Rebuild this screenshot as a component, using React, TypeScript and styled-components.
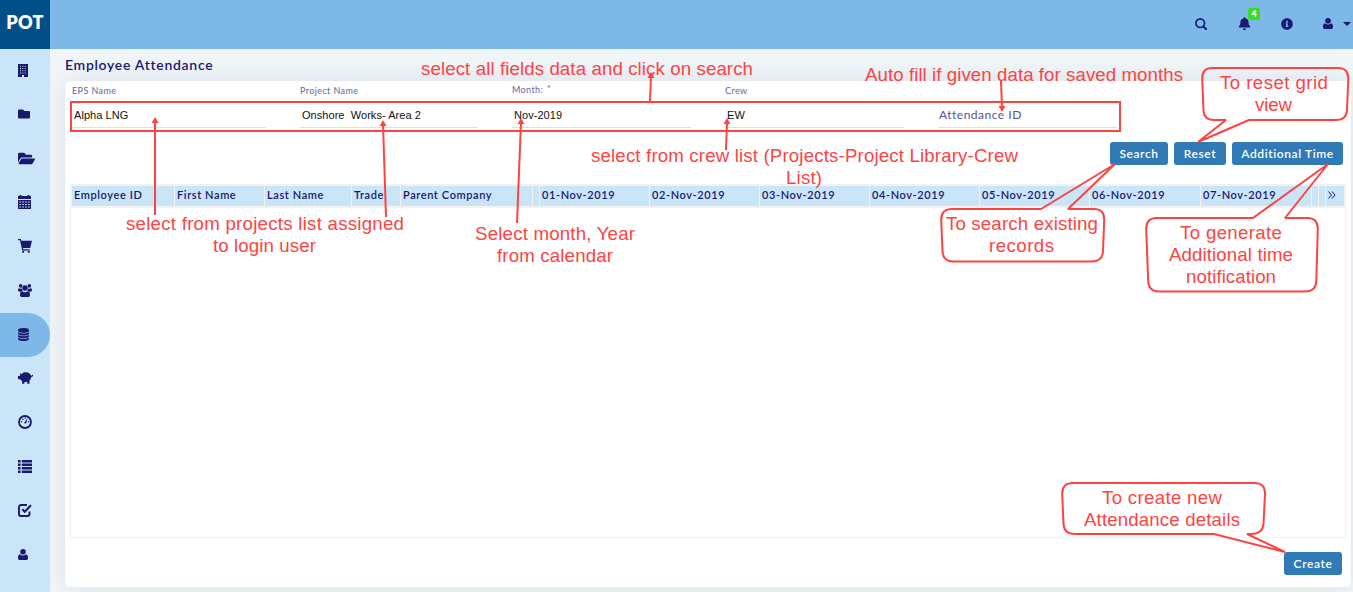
import React from 'react';
import styled, { createGlobalStyle } from 'styled-components';
import { FaFolder, FaFolderOpen, FaBell, FaInfoCircle } from 'react-icons/fa';

const navy = '#191970';
const red = '#fe4343';

const GlobalStyle = createGlobalStyle`
  * { box-sizing: border-box; }
  html, body { margin: 0; height: 592px; overflow: hidden; }
  body { background: #f1f6fa; font-family: Lato, "Liberation Sans", sans-serif; color: ${navy}; }
`;

const Page = styled.div`
  position: relative;
  display: flex;
  flex-direction: column;
  width: 1353px;
  height: 592px;
  overflow: hidden;
`;

const TopBar = styled.header`
  display: flex;
  height: 49px;
  background: #7db8e8;
`;

const Brand = styled.div`
  width: 50px;
  height: 49px;
  padding-top: 11px;
  background: #024f88;
  color: #fff;
  text-align: center;
  font-size: 18px;
  line-height: 23px;
  font-weight: 800;
  letter-spacing: 0.3px;
`;

const Tools = styled.div`
  display: flex;
  align-items: center;
  margin-left: auto;
  padding: 0 2px 2px 0;
`;

const Tool = styled.span<{ $gap: number }>`
  position: relative;
  display: flex;
  align-items: center;
  margin-right: ${(p) => p.$gap}px;
  svg { display: block; }
`;

const Badge = styled.span`
  position: absolute;
  left: 10px;
  top: -9px;
  width: 12px;
  height: 12px;
  border-radius: 2px;
  background: #37dd20;
  color: #fff;
  font-size: 9px;
  line-height: 11px;
  font-weight: 900;
  text-align: center;
`;

const Body = styled.div`
  display: flex;
  flex: 1;
  min-height: 0;
`;

const Sidebar = styled.nav`
  position: relative;
  z-index: 1;
  width: 50px;
  background: #cae5f8;
`;

const NavItem = styled.div<{ $active?: boolean }>`
  display: flex;
  align-items: center;
  height: 44px;
  padding: 0 0 2px 18px;
  border-radius: 0 22px 22px 0;
  background: ${(p) => (p.$active ? '#7db8e8' : 'transparent')};
  svg { display: block; overflow: visible; }
`;

const Main = styled.main`
  display: flex;
  flex-direction: column;
  flex: 1;
  padding: 0 2px 5px 15px;
`;

const Title = styled.h1`
  margin: 0;
  height: 32px;
  font-size: 14px;
  line-height: 32px;
  font-weight: 600;
  letter-spacing: 0.7px;
`;

const Card = styled.section`
  display: flex;
  flex-direction: column;
  flex: 1;
  padding: 0 5px;
  border-radius: 5px;
  background: #fff;
  box-shadow: 0 0 28px rgba(90, 110, 120, 0.16);
`;

const Fields = styled.div`
  display: flex;
  height: 47px;
  padding-left: 2px;
`;

const Field = styled.div<{ $width: number; $gap: number }>`
  display: flex;
  flex-direction: column;
  width: ${(p) => p.$width}px;
  margin-right: ${(p) => p.$gap}px;
  border-bottom: 1px solid #dedede;
`;

const Label = styled.label<{ $raised?: boolean }>`
  height: 24px;
  padding-top: ${(p) => (p.$raised ? 3 : 4)}px;
  color: #6565a0;
  font-size: 9px;
  line-height: 12px;
  letter-spacing: 0.4px;
  sup { font-size: 9px; line-height: 0; margin-left: 1px; vertical-align: 1px; }
`;

const Value = styled.div`
  padding-left: 2px;
  color: #111;
  font-family: "Liberation Sans", Arial, sans-serif;
  font-size: 11px;
  line-height: 20px;
  letter-spacing: 0.05px;
  white-space: pre;
`;

const Placeholder = styled.div`
  padding-left: 1px;
  color: #54549a;
  font-size: 12px;
  line-height: 20px;
  letter-spacing: 0.5px;
`;

const Actions = styled.div`
  display: flex;
  justify-content: flex-end;
  gap: 6px;
  padding: 14px 3px 0 0;
`;

const Button = styled.button<{ $width: number }>`
  width: ${(p) => p.$width}px;
  height: 23px;
  padding: 0;
  border: 0;
  border-radius: 3px;
  background: #2f7ab7;
  color: #fff;
  font: 600 12px/23px Lato, sans-serif;
  letter-spacing: 0.6px;
  white-space: nowrap;
`;

const Grid = styled.div`
  display: flex;
  flex-direction: column;
  height: 354px;
  margin-top: 19px;
  border: 1px solid #f1f1f1;
`;

const HeaderRow = styled.div`
  display: flex;
  height: 23px;
  padding: 1px 1px 2px;
  background: #f3f3f3;
`;

const HeaderCell = styled.div<{ $width: number }>`
  flex: none;
  width: ${(p) => p.$width}px;
  height: 20px;
  padding-left: 2px;
  border-right: 1px solid #f3f3f3;
  background: #cae5f8;
  font-size: 11px;
  line-height: 18px;
  font-weight: 600;
  letter-spacing: 0.6px;
  white-space: nowrap;
  &:last-child { border-right: 0; }
`;

const Footer = styled.div`
  display: flex;
  justify-content: flex-end;
  padding: 14px 4px 0 0;
`;

const Notes = styled.svg`
  position: absolute;
  inset: 0;
  z-index: 2;
  pointer-events: none;
  font-family: "Liberation Sans", Arial, sans-serif;
  font-size: 18.67px;
`;

const Glyph = ({ w, h, children }: { w: number; h: number; children: React.ReactNode }) => (
  <svg width={w} height={h} viewBox={`0 0 ${w} ${h}`} fill={navy}>
    {children}
  </svg>
);

const BuildingIcon = () => (
  <Glyph w={10} h={13}>
    <path
      fillRule="evenodd"
      d="M0 0h10v13H6v-2H4v2H0zM2 1.800v.9h1v-.9zm2.300 0v.9h1v-.9zm2.400 0v.9h1v-.9zM2 4v.9h1V4zm2.300 0v.9h1V4zm2.400 0v.9h1V4zM2 6.300v.9h1v-.9zm2.300 0v.9h1v-.9zm2.400 0v.9h1v-.9zM2 8.600v.9h1v-.9zm2.300 0v.9h1v-.9zm2.400 0v.9h1v-.9z"
    />
  </Glyph>
);

const CalendarIcon = () => (
  <Glyph w={13} h={14}>
    <path
      fillRule="evenodd"
      d="M0 1h1.500V0h2v1h6V0h2v1H13v3H0zM0 5h13v9H0zM1.300 6.500v1H3v-1zm2.900 0v1h1.700v-1zm2.900 0v1h1.700v-1zm2.900 0v1h1.700v-1zM1.300 9v1H3V9zm2.900 0v1h1.700V9zm2.900 0v1h1.700V9zm2.900 0v1h1.700V9zM1.300 11.500v1H3v-1zm2.900 0v1h1.700v-1zm2.900 0v1h1.700v-1zm2.900 0v1h1.700v-1z"
    />
  </Glyph>
);

const CartIcon = () => (
  <Glyph w={14} h={14}>
    <path d="M0 0h2.800l.5 1.800H14L12.200 9H4.900l.4 1.300h6.400v1.200H4.200L2 1.200H0z" />
    <circle cx="5.200" cy="12.800" r="1.100" />
    <circle cx="10.800" cy="12.800" r="1.100" />
  </Glyph>
);

const UsersIcon = () => (
  <Glyph w={14} h={13}>
    <circle cx="2.700" cy="1.900" r="1.800" />
    <circle cx="11.300" cy="1.900" r="1.800" />
    <circle cx="7" cy="4" r="2.700" />
    <path d="M1 4.300c1 .6 2 .6 3 .1 0 1 .3 1.900.8 2.500-.8 0-1.400.3-1.900.8H1.600C.6 7.700 0 7.200 0 6.300c0-.9.300-2 1-2zM13 4.300c-1 .6-2 .6-3 .1 0 1-.3 1.900-.8 2.500.8 0 1.400.3 1.900.8h1.300c1 0 1.600-.5 1.600-1.400 0-.9-.3-2-1-2z" />
    <path d="M4.300 7.200c1.700 1.300 3.700 1.300 5.400 0 1.500.2 2.300 1.500 2.300 3.700 0 1.300-.8 2.100-2 2.100H4c-1.200 0-2-.8-2-2.100 0-2.200.8-3.500 2.300-3.700z" />
  </Glyph>
);

const DatabaseIcon = () => (
  <svg width="11" height="13" viewBox="0 0 1536 1792" fill={navy}>
    <path d="M768 768q237 0 443-43t325-127v170q0 69-103 128t-280 93.500-385 34.500-385-34.500-280-93.500-103-128v-170q119 84 325 127t443 43zm0 768q237 0 443-43t325-127v170q0 69-103 128t-280 93.500-385 34.500-385-34.500-280-93.500-103-128v-170q119 84 325 127t443 43zm0-384q237 0 443-43t325-127v170q0 69-103 128t-280 93.500-385 34.500-385-34.500-280-93.500-103-128v-170q119 84 325 127t443 43zm0-1152q208 0 385 34.500t280 93.500 103 128v128q0 69-103 128t-280 93.500-385 34.500-385-34.500-280-93.500-103-128v-128q0-69 103-128t280-93.500 385-34.500z" />
  </svg>
);

const PiggyIcon = () => (
  <svg width="16" height="12" viewBox="1 0 16 12" fill={navy}>
    <path d="M2.800 1.200 5 1.900C6 .6 7.500.3 9 .3c2.600 0 4.300 1.300 5 3.500.6.2 1-.1.900-.7l1-.3c.5 1.400-.4 2.300-1.700 2.200-.1 1.500-.8 2.600-1.700 3.400v3.300h-2.300V9.900H7.400v1.800H5.100V9C4.300 8.600 3.700 8 3.300 7.200H1V4.100h1.500l.9-1.200z" />
  </svg>
);

const DashboardIcon = () => (
  <Glyph w={14} h={14}>
    <circle cx="7" cy="7" r="6" fill="none" stroke={navy} strokeWidth="1.800" />
    <path d="M6.200 7.800 9.500 3l-1.300 5.200a1.200 1.200 0 0 1-2-.4z" />
    <circle cx="3.500" cy="6.800" r=".75" />
    <circle cx="4.800" cy="4.300" r=".75" />
    <circle cx="7.200" cy="3.100" r=".75" />
    <circle cx="10.600" cy="6.800" r=".75" />
  </Glyph>
);

const ListIcon = () => (
  <Glyph w={14} h={13}>
    {[0, 3.600, 7.100, 10.600].map((y) => (
      <path key={y} d={`M0 ${y}h2.600v2.400H0zM3.800 ${y}H14v2.400H3.800z`} />
    ))}
  </Glyph>
);

const CheckIcon = () => (
  <Glyph w={14} h={13}>
    <path
      d="M9 1H3a2 2 0 0 0-2 2v7a2 2 0 0 0 2 2h6.500a2 2 0 0 0 2-2V7.500"
      fill="none"
      stroke={navy}
      strokeWidth="1.900"
    />
    <path d="M4.300 5.300 6.700 7.700 13 1.300" fill="none" stroke={navy} strokeWidth="2.100" />
  </Glyph>
);

const PersonIcon = () => (
  <Glyph w={10} h={11}>
    <circle cx="5" cy="2.800" r="2.800" />
    <path d="M2 5.200a4 4 0 0 0 6 0c1.500.3 2 1.800 2 3.500C10 10.200 9.300 11 8.200 11H1.800C.7 11 0 10.200 0 8.700 0 7 .5 5.500 2 5.200z" />
  </Glyph>
);

const SearchIcon = () => (
  <Glyph w={12} h={12}>
    <circle cx="5.200" cy="5.200" r="4.300" fill="none" stroke={navy} strokeWidth="1.700" />
    <path d="m8.300 8.300 2.900 2.900" stroke={navy} strokeWidth="2" strokeLinecap="round" />
  </Glyph>
);

const CaretIcon = () => (
  <Glyph w={8} h={4}>
    <path d="M0 0h8L4 4z" />
  </Glyph>
);

const navIcons = [
  <BuildingIcon />,
  <FaFolder size={12} color={navy} />,
  <FaFolderOpen size={17} color={navy} />,
  <CalendarIcon />,
  <CartIcon />,
  <UsersIcon />,
  <DatabaseIcon />,
  <PiggyIcon />,
  <DashboardIcon />,
  <ListIcon />,
  <CheckIcon />,
  <PersonIcon />,
];

const columns: [string, number][] = [
  ['Employee ID', 103],
  ['First Name', 90],
  ['Last Name', 87],
  ['Trade', 49],
  ['Parent Company', 132],
  ['', 7],
  ['01-Nov-2019', 110],
  ['02-Nov-2019', 110],
  ['03-Nov-2019', 110],
  ['04-Nov-2019', 110],
  ['05-Nov-2019', 110],
  ['06-Nov-2019', 111],
  ['07-Nov-2019', 111],
  ['', 7],
  ['', 7],
];

const notes: [string, number, number, number][] = [
  ['select all fields data and click on search', 421, 75, 332],
  ['Auto fill if given data for saved months', 865, 81, 318],
  ['select from crew list (Projects-Project Library-Crew', 591, 162, 427],
  ['List)', 786, 184, 36],
  ['select from projects list assigned', 126, 230, 278],
  ['to login user', 213, 252, 103],
  ['Select month, Year', 475, 240, 160],
  ['from calendar', 497, 262, 116],
  ['To reset grid', 1220, 89, 108],
  ['view', 1255, 111, 37],
  ['To search existing', 946, 230, 152],
  ['records', 989, 252, 65],
  ['To generate', 1180, 239, 102],
  ['Additional time', 1169, 261, 124],
  ['notification', 1186, 283, 90],
  ['To create new', 1102, 504, 120],
  ['Attendance details', 1084, 526, 156],
];

const callouts = [
  'M1212 68H1338Q1348.500 68 1348.300 79L1347 110Q1346.500 120 1336 120H1249L1198 142 1226 120H1214Q1204 120 1203.500 110L1202.200 79Q1202 68 1212 68z',
  'M952 209H1041L1115 164 1068 209H1094Q1104.500 209 1104.200 220L1103 251Q1102.500 261.500 1092 261.500H953Q943 261.500 942.500 251L941.200 220Q941 209 952 209z',
  'M1157 218H1253L1328 164 1285 218H1307Q1318 218 1317.800 229L1316.300 281Q1316 291.500 1305 291.500H1159Q1148.500 291.500 1148.200 281L1146.200 229Q1146 218 1157 218z',
  'M1073 483H1254Q1265.500 483 1265 494L1263.500 524Q1262.500 534 1251 534H1247L1285 552 1214 534H1075Q1064 534 1063.500 524L1062.200 494Q1062 483 1073 483z',
];

// Each arrow runs from its tail to its tip.
const arrows: [number, number, number, number][] = [
  [155, 215, 155, 117],
  [386, 217, 383, 120],
  [517, 223, 521, 118],
  [650, 101, 651, 72],
  [726, 150, 727, 118],
  [1001, 81, 1002, 112],
];

export default function App() {
  return (
    <Page>
      <GlobalStyle />
      <TopBar>
        <Brand>POT</Brand>
        <Tools>
          <Tool $gap={31}><SearchIcon /></Tool>
          <Tool $gap={30}>
            <FaBell size={13} color={navy} />
            <Badge>4</Badge>
          </Tool>
          <Tool $gap={30}><FaInfoCircle size={12} color={navy} /></Tool>
          <Tool $gap={10}><PersonIcon /></Tool>
          <Tool $gap={0}><CaretIcon /></Tool>
        </Tools>
      </TopBar>
      <Body>
        <Sidebar>
          {navIcons.map((icon, i) => (
            <NavItem key={i} $active={i === 6}>{icon}</NavItem>
          ))}
        </Sidebar>
        <Main>
          <Title>Employee Attendance</Title>
          <Card>
            <Fields>
              <Field $width={194} $gap={34}>
                <Label>EPS Name</Label>
                <Value>Alpha LNG</Value>
              </Field>
              <Field $width={178} $gap={34}>
                <Label>Project Name</Label>
                <Value>Onshore  Works- Area 2</Value>
              </Field>
              <Field $width={179} $gap={34}>
                <Label $raised>Month: <sup>*</sup></Label>
                <Value>Nov-2019</Value>
              </Field>
              <Field $width={179} $gap={34}>
                <Label>Crew</Label>
                <Value>EW</Value>
              </Field>
              <Field $width={179} $gap={0}>
                <Label />
                <Placeholder>Attendance ID</Placeholder>
              </Field>
            </Fields>
            <Actions>
              <Button $width={58}>Search</Button>
              <Button $width={52}>Reset</Button>
              <Button $width={111}>Additional Time</Button>
            </Actions>
            <Grid>
              <HeaderRow>
                {columns.map(([name, width], i) => (
                  <HeaderCell key={i} $width={width}>{name}</HeaderCell>
                ))}
                <HeaderCell $width={18}>
                  <svg width="8" height="8" viewBox="0 0 8 8" fill="none" stroke={navy}>
                    <path d="m.5.5 3 3.500-3 3.500M4 .5l3 3.500-3 3.500" />
                  </svg>
                </HeaderCell>
              </HeaderRow>
            </Grid>
            <Footer>
              <Button $width={58}>Create</Button>
            </Footer>
          </Card>
        </Main>
      </Body>
      <Notes width="1353" height="592" viewBox="0 0 1353 592">
        <g fill="none" stroke={red} strokeWidth="2">
          <rect x="71" y="102" width="1049" height="29" />
          {callouts.map((d) => (
            <path key={d} d={d} strokeLinejoin="bevel" />
          ))}
          {arrows.map(([x1, y1, x2, y2]) => (
            <line key={x1} x1={x1} y1={y1} x2={x2} y2={y2 > y1 ? y2 - 4 : y2 + 4} />
          ))}
        </g>
        <g fill={red}>
          {arrows.map(([x1, y1, x2, y2]) => {
            const base = y2 > y1 ? y2 - 6 : y2 + 6;
            return <path key={x1} d={`M${x2} ${y2}L${x2 - 3.500} ${base}H${x2 + 3.500}z`} />;
          })}
          {notes.map(([text, x, y, width]) => (
            <text key={text} x={x} y={y} textLength={width}>{text}</text>
          ))}
        </g>
      </Notes>
    </Page>
  );
}
